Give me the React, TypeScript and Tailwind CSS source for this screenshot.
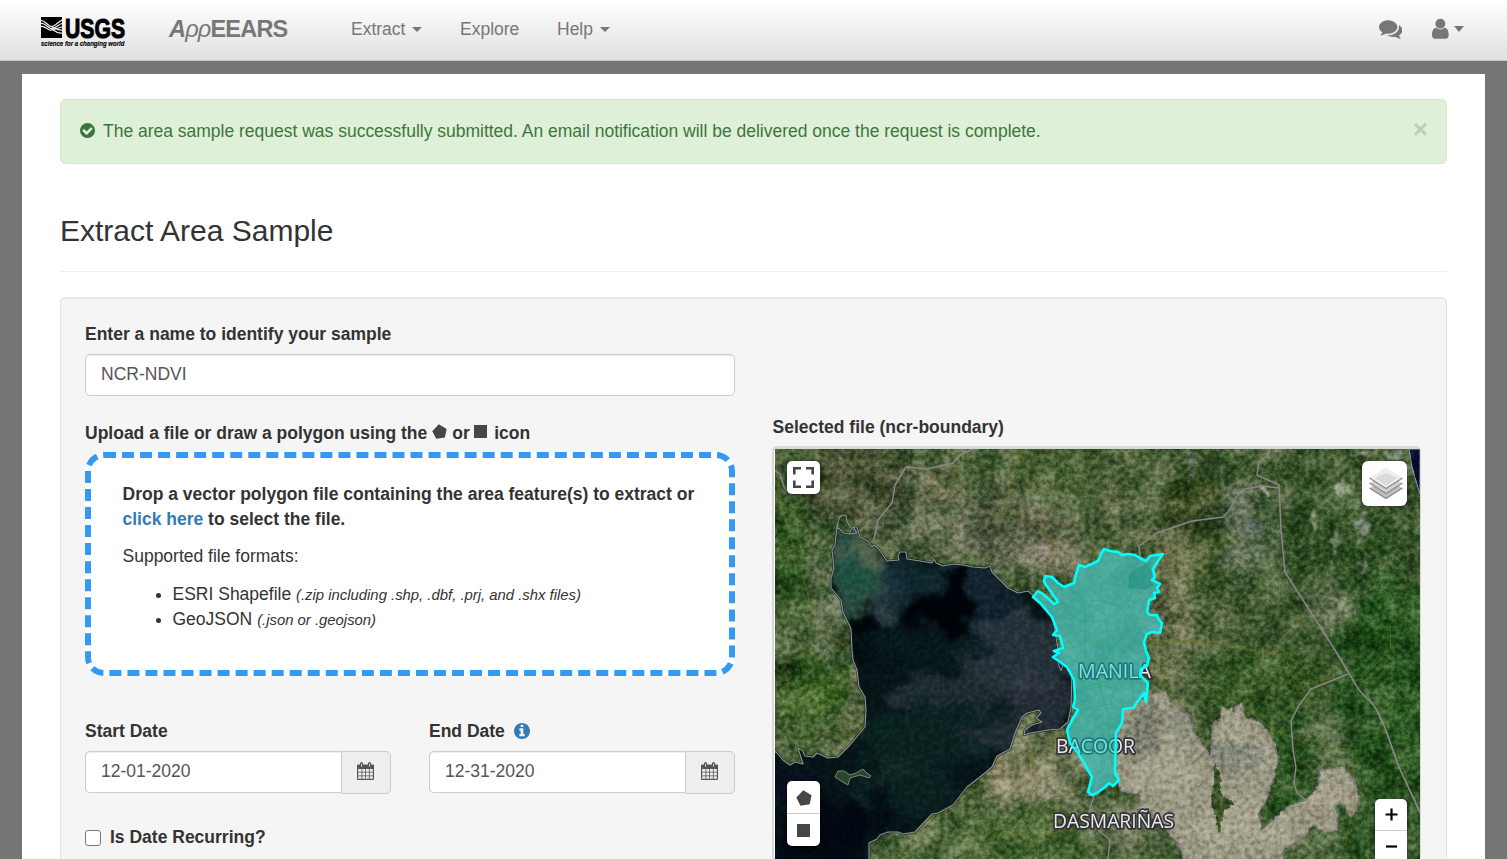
import React from "react";

const BAY =
  "M837 527L835 545L832 550L834 568L831 578L831 588L841 600L843 612L851 629L852 650L853 660L857 670L859 687L865 697L866 710L865 727L850 745L838 757L828 758L817 753L813 757L805 756L802 750L798 748L803 764L795 762L790 765L783 760L777 753L773 750L773 862L869 862L869 843L877 839L880 835L888 832L898 832L903 834L915 832L932 814L938 813L953 805L967 787L980 777L992 767L997 756L1010 749L1015 733L1022 717L1027 713L1039 710L1041 713L1036 718L1042 722L1032 725L1025 730L1024 735L1030 733L1048 730L1060 729L1068 722L1071 707L1072 672L1063 663L1058 650L1055 630L1053 620L1045 605L1035 597L1028 591L1018 593L1008 588L1000 580L992 572L990 566L985 568L973 567L963 565L953 564L943 566L936 563L934 559L932 563L920 561L907 559L906 552L900 552L898 556L899 560L887 561L878 548L874 545L872 547L868 541L860 537L857 527L853 527L849 534L844 533Z";
const LAKE =
  "M1144 697L1153 693L1165 692L1168 696L1170 702L1176 704L1180 710L1188 716L1192 725L1194 732L1200 740L1205 747L1210 757L1212 743L1212 725L1220 718L1222 707L1229 710L1232 706L1233 713L1237 706L1242 703L1245 717L1253 720L1258 722L1267 730L1275 743L1278 760L1273 780L1270 790L1267 800L1258 813L1262 830L1275 818L1290 805L1307 800L1317 787L1320 770L1328 769L1343 767L1348 773L1355 780L1358 797L1355 815L1350 817L1345 805L1335 805L1338 817L1337 832L1325 832L1313 825L1303 837L1283 850L1282 862L1185 862L1177 842L1160 823L1140 810L1139 793L1123 793L1116 780L1116 733L1122 723L1123 709L1133 708Z";
const REGION =
  "M1033 597L1038 591L1043 594L1054 604L1058 602L1044 582L1045 576L1052 577L1058 583L1064 587L1074 583L1076 574L1079 565L1085 567L1098 561L1101 554L1104 549L1110 551L1118 552L1122 555L1128 554L1135 555L1140 558L1146 561L1150 556L1163 554L1158 561L1153 569L1155 577L1152 580L1160 584L1157 588L1159 592L1154 593L1155 598L1149 600L1148 607L1147 612L1150 615L1157 615L1159 620L1162 623L1160 633L1152 632L1147 634L1144 642L1146 651L1149 658L1147 666L1141 669L1140 675L1148 683L1146 702L1144 693L1133 708L1123 709L1122 723L1116 733L1115 773L1119 780L1113 786L1109 783L1105 787L1097 793L1092 795L1088 792L1092 777L1078 753L1070 743L1067 730L1072 720L1078 710L1073 707L1075 700L1074 680L1067 667L1053 657L1059 653L1054 651L1063 648L1060 636L1053 635L1057 630L1052 617L1040 603Z";
const BORDERS = [
  "M973 449L960 455L953 463L927 469L906 467L895 485L892 503L878 520L874 540",
  "M1270 449L1268 455L1259 462L1257 475L1279 485L1281 530L1285 572L1335 650L1359 690L1375 707L1385 728L1398 765L1420 813",
  "M1279 488L1262 486L1245 489L1235 498L1230 510L1223 517L1192 521L1157 533L1139 546L1140 557",
  "M1348 674L1311 689L1298 707L1291 721L1293 750L1296 767L1294 783L1297 793L1307 801",
  "M775 471L780 474L784 487L790 494",
  "M1088 795L1094 796L1089 812M1105 812L1098 830L1110 840L1108 859",
];
const TRAILS = [
  "M775 455L781 505L790 535L801 570L811 605L828 633L849 650",
  "M788 508L820 489L850 471L858 449",
  "M962 455L1000 500L1037 527L1054 540L1064 575L1073 586",
  "M952 470L965 500L985 512L1040 525L1054 543",
  "M1022 449L1010 480L1006 515M1045 454L1023 500L1028 515",
  "M895 859L920 830L960 800L990 780L1025 758L1070 730",
  "M960 815L1000 835L1045 835L1068 830",
  "M812 740L826 731L850 736L865 725",
  "M1145 641L1210 641L1250 650L1285 655L1297 690L1320 680L1360 680L1390 650",
  "M1420 597L1403 610L1390 625L1391 650",
  "M1210 705L1235 697L1270 728L1310 745L1352 750L1355 800L1345 845",
  "M1150 663L1167 665L1163 680L1180 705",
  "M1030 750L1035 780L1028 800M1053 728L1053 780",
  "M1105 750L1120 805L1150 859",
];
const STREETS =
  "M1056 605L1082 600L1105 615L1110 650L1098 680L1108 715L1112 765M1075 690L1098 683L1140 675M1085 600L1085 650L1070 665M1040 600L1085 622L1110 620M1110 620L1130 600L1132 585M1085 640L1115 645L1140 620M1096 600L1118 605L1144 635M1080 710L1110 704L1118 680L1104 660M1075 640L1055 645M1078 680L1120 690";

type Blob = [number, number, number, number, string, number];
const LAND_PATCHES: Blob[] = [
  [860, 480, 55, 40, "#3d4028", 0.7],
  [960, 520, 90, 40, "#646650", 0.5],
  [945, 485, 10, 20, "#8f7c5c", 0.6],
  [1010, 540, 60, 30, "#6c6a56", 0.6],
  [1055, 550, 30, 40, "#79735d", 0.6],
  [1060, 470, 60, 30, "#435a2c", 0.6],
  [785, 560, 22, 60, "#265018", 0.8],
  [808, 690, 40, 35, "#355f1d", 0.9],
  [780, 678, 18, 32, "#1a3010", 0.8],
  [827, 615, 12, 60, "#68755a", 0.65],
  [860, 685, 7, 45, "#978c70", 0.5],
  [835, 738, 28, 14, "#6b7147", 0.5],
  [1190, 500, 30, 35, "#293a13", 0.75],
  [1120, 500, 28, 45, "#5b6642", 0.65],
  [1245, 530, 30, 45, "#4b5c48", 0.65],
  [1190, 560, 40, 25, "#586330", 0.5],
  [1230, 620, 70, 40, "#465a30", 0.6],
  [1165, 590, 20, 65, "#81795c", 0.55],
  [1170, 655, 22, 45, "#6d714d", 0.6],
  [1315, 540, 40, 75, "#2a4a1e", 0.7],
  [1380, 580, 32, 80, "#21471a", 0.75],
  [1335, 600, 28, 24, "#606c50", 0.5],
  [1265, 685, 60, 35, "#2b501a", 0.8],
  [1290, 770, 30, 55, "#234f1b", 0.85],
  [1390, 690, 55, 110, "#21501a", 0.85],
  [1330, 730, 20, 28, "#506342", 0.5],
  [1385, 830, 60, 38, "#2a5520", 0.8],
  [1040, 765, 60, 40, "#878467", 0.7],
  [1012, 780, 28, 25, "#999072", 0.6],
  [950, 835, 60, 30, "#5a7040", 0.7],
  [1045, 840, 70, 28, "#48682e", 0.7],
  [1130, 830, 45, 30, "#72785a", 0.6],
];
const WATER_PATCHES: Blob[] = [
  [855, 565, 32, 45, "#315c49", 0.8],
  [865, 550, 26, 12, "#6e7358", 0.6],
  [885, 590, 14, 35, "#475d65", 0.55],
  [850, 575, 18, 20, "#164f42", 0.5],
  [940, 585, 70, 26, "#132e36", 0.75],
  [990, 600, 32, 38, "#142431", 0.7],
  [955, 600, 16, 32, "#000206", 0.95],
  [928, 618, 24, 24, "#000306", 0.95],
  [865, 635, 18, 28, "#000408", 0.85],
  [1020, 650, 55, 40, "#2f3b46", 0.75],
  [960, 690, 70, 20, "#28343a", 0.7],
  [1040, 705, 38, 32, "#353c4b", 0.6],
  [935, 735, 80, 32, "#0a2422", 0.8],
  [1000, 735, 34, 14, "#272f37", 0.8],
  [905, 790, 58, 26, "#0b2322", 0.75],
  [895, 770, 20, 18, "#163022", 0.5],
  [820, 835, 50, 35, "#020511", 0.9],
  [790, 785, 22, 16, "#0a0e22", 0.8],
  [880, 810, 10, 20, "#00070b", 0.7],
  [925, 645, 70, 16, "#081a1e", 0.8],
];
const LAKE_PATCHES: Blob[] = [
  [1140, 735, 18, 28, "#6d7265", 0.7],
  [1190, 725, 26, 18, "#7f8676", 0.6],
  [1165, 770, 30, 30, "#aaa892", 0.7],
  [1240, 760, 25, 18, "#768073", 0.65],
  [1235, 725, 16, 14, "#aba792", 0.65],
  [1260, 755, 12, 22, "#a6a390", 0.6],
  [1240, 825, 55, 28, "#aeab95", 0.6],
  [1325, 795, 25, 18, "#aca791", 0.6],
];
const CLOUDS: Blob[] = [
  [1313, 522, 3, 9, "#bbb9aa", 0.7],
  [1342, 488, 3, 8, "#c0c0b0", 0.75],
  [1336, 545, 4, 14, "#92988a", 0.7],
  [1362, 526, 5, 18, "#8b9288", 0.65],
  [1340, 600, 8, 8, "#a9aa9a", 0.7],
  [1365, 565, 5, 10, "#949a8d", 0.65],
  [1266, 492, 4, 3, "#cfc8b7", 0.85],
  [1363, 453, 9, 4, "#a8ada0", 0.7],
  [1395, 455, 10, 5, "#8f9994", 0.7],
  [1400, 530, 2, 22, "#69795a", 0.5],
  [1255, 527, 8, 4, "#5f7079", 0.6],
  [1190, 465, 5, 12, "#5d6b67", 0.6],
  [1172, 612, 5, 4, "#aaa087", 0.6],
  [1113, 520, 4, 15, "#99947a", 0.4],
];

function Patches({ items }: { items: Blob[] }) {
  return (
    <>
      {items.map(([cx, cy, rx, ry, fill, opacity], i) => (
        <ellipse key={i} cx={cx} cy={cy} rx={rx} ry={ry} fill={fill} opacity={opacity} />
      ))}
    </>
  );
}

function SatelliteMap() {
  return (
    <svg className="block h-[410px] w-[645px]" viewBox="775 449 645 410">
      <defs>
        <filter id="soft" x="-20%" y="-20%" width="140%" height="140%" colorInterpolationFilters="sRGB">
          <feGaussianBlur stdDeviation="9" result="b" />
          <feTurbulence type="fractalNoise" baseFrequency="0.04" numOctaves="4" seed="5" result="n" />
          <feDisplacementMap in="b" in2="n" scale="50" xChannelSelector="R" yChannelSelector="G" />
        </filter>
        <filter id="wisp" x="-20%" y="-20%" width="140%" height="140%" colorInterpolationFilters="sRGB">
          <feTurbulence type="fractalNoise" baseFrequency="0.09" numOctaves="3" seed="4" />
          <feDisplacementMap in="SourceGraphic" scale="24" xChannelSelector="R" yChannelSelector="G" />
          <feGaussianBlur stdDeviation="0.8" />
        </filter>
        <filter id="deep" x="-20%" y="-20%" width="140%" height="140%" colorInterpolationFilters="sRGB">
          <feGaussianBlur stdDeviation="5" result="b" />
          <feTurbulence type="fractalNoise" baseFrequency="0.035" numOctaves="4" seed="8" result="n" />
          <feDisplacementMap in="b" in2="n" scale="42" xChannelSelector="R" yChannelSelector="G" />
        </filter>
        <filter id="rough" x="-5%" y="-5%" width="110%" height="110%" colorInterpolationFilters="sRGB">
          <feTurbulence type="fractalNoise" baseFrequency="0.18" numOctaves="2" seed="3" />
          <feDisplacementMap in="SourceGraphic" scale="5" xChannelSelector="R" yChannelSelector="G" />
        </filter>
        <filter id="grain" x="0" y="0" width="100%" height="100%" colorInterpolationFilters="sRGB">
          <feTurbulence type="fractalNoise" baseFrequency="0.2" numOctaves="4" seed="11" />
          <feColorMatrix values="1.8 .1 0 0 -.43  1.9 0 0 0 -.43  1.8 0 .1 0 -.43  0 0 0 0 1" />
        </filter>
        <filter id="relief" x="0" y="0" width="100%" height="100%" colorInterpolationFilters="sRGB">
          <feTurbulence type="fractalNoise" baseFrequency="0.035" numOctaves="5" seed="23" />
          <feColorMatrix values="2.4 0 0 0 -.68  1.8 0 0 0 -.36  2 0 0 0 -.47  0 0 0 0 1" />
        </filter>
        <clipPath id="bay"><path d={BAY} /></clipPath>
        <clipPath id="lake"><path d={LAKE} /></clipPath>
      </defs>
      <rect x="775" y="449" width="645" height="410" fill="#455c32" />
      <g filter="url(#soft)"><Patches items={LAND_PATCHES} /></g>
      <rect x="775" y="449" width="645" height="410" filter="url(#relief)" opacity="0.5" className="mix-blend-soft-light" />
      <g filter="url(#wisp)"><Patches items={CLOUDS} /></g>
      <path d="M1409 449L1412 467L1416 481L1420 494V449Z" fill="#070d2e" stroke="#8d98a1" strokeWidth="1" />
      <g filter="url(#rough)">
        <path d={LAKE} fill="#97957f" />
        <g clipPath="url(#lake)"><g filter="url(#deep)"><Patches items={LAKE_PATCHES} /></g></g>
        <path d="M1215 763L1213 785L1211 803L1215 816L1220 833L1223 810L1235 804L1222 795L1220 775Z" fill="#3a5127" />
      </g>
      <rect x="775" y="449" width="645" height="410" filter="url(#grain)" opacity="0.5" className="mix-blend-soft-light" />
      <g filter="url(#rough)"><path d={LAKE} fill="none" stroke="#77737a" strokeWidth="1.2" /></g>
      <g clipPath="url(#bay)">
        <path d={BAY} fill="#061416" />
        <g filter="url(#deep)"><Patches items={WATER_PATCHES} /></g>
        <rect x="775" y="500" width="310" height="359" filter="url(#grain)" opacity="0.2" className="mix-blend-soft-light" />
      </g>
      <g strokeLinejoin="round">
        <path d={BAY} fill="none" stroke="#151d20" strokeWidth="2.6" opacity="0.7" />
        <path d={BAY} fill="none" stroke="#8b9290" strokeWidth="1.1" />
        <path d="M837 527L839 518L842 515L846 516L847 522L851 528M853 527L857 533L849 534" fill="none" stroke="#8b9290" strokeWidth="1.1" />
        <path d="M835 777L838 771L844 771L850 775L856 773L863 769L867 773L871 776L869 778L860 775L850 778L848 785L841 781Z" fill="#27482a" stroke="#778880" strokeWidth="1" />
        <path d="M1058 663L1061 671L1063 665" fill="none" stroke="#858c91" />
      </g>
      <g fill="none" stroke="#76741c" strokeWidth="1" opacity="0.6" strokeLinejoin="round">
        {TRAILS.map((d) => <path key={d} d={d} />)}
      </g>
      <g fill="none" stroke="#8b8489" strokeWidth="1.5" strokeLinejoin="round">
        {BORDERS.map((d) => <path key={d} d={d} />)}
        <path d="M1369 698L1378 711L1388 735L1401 772L1420 810" strokeWidth="1" />
      </g>
      <path d={REGION} fill="#a9a498" opacity="0.6" />
      <g
        className="font-['Open_Sans','Noto_Sans',sans-serif] text-[20px]"
        fill="#e9e9e9"
        stroke="#333238"
        strokeWidth="3.5"
        strokeLinejoin="round"
        paintOrder="stroke"
      >
        <text x="1078" y="678" textLength="73" lengthAdjust="spacingAndGlyphs">MANILA</text>
        <text x="1056" y="753" textLength="79" lengthAdjust="spacingAndGlyphs">BACOOR</text>
        <text x="1053" y="828" textLength="121" lengthAdjust="spacingAndGlyphs">DASMARIÑAS</text>
      </g>
      <path d={REGION} fill="#00d0cc" fillOpacity="0.45" />
      <path d={STREETS} fill="none" stroke="#2da875" strokeWidth="1" opacity="0.65" />
      <path d="M1130 572L1150 562L1154 585L1145 590L1128 588Z" fill="#148574" opacity="0.4" />
      <path d={REGION} fill="none" stroke="#00ffff" strokeWidth="2.6" strokeLinejoin="round" />
    </svg>
  );
}

function UsgsLogo() {
  return (
    <svg className="h-[32px] w-[86px] overflow-visible" viewBox="0 0 86 32">
      <rect x="1" y="1" width="21" height="21" />
      <g fill="none" stroke="#f4f4f4" strokeWidth="1.2">
        <path d="M1 4.500C5 4.500 7 9 11 10.500C14 11.200 18 6 22 4" />
        <path d="M1 7.500C5 7 7 11 11 12.500C15 13.500 18 8.500 22 7.500" />
        <path d="M1 10.500C4 9.500 6 12.500 9.500 14C13 15 18 11.500 22 11" />
        <path d="M11 12.500C14 14 17 18 22 17" />
        <path d="M12 11C15 12 18 14.500 22 14" />
      </g>
      <text x="25" y="21.700" textLength="60" lengthAdjust="spacingAndGlyphs" stroke="#000" strokeWidth="1.1" className="font-['Liberation_Sans',Arial,sans-serif] text-[27.500px] font-bold">USGS</text>
      <text x="1" y="29.500" textLength="83.500" lengthAdjust="spacingAndGlyphs" stroke="#000" strokeWidth="0.15" className="font-['Liberation_Sans',Arial,sans-serif] text-[7.500px] font-bold italic">science for a changing world</text>
    </svg>
  );
}

function Caret() {
  return <span className="inline-block border-x-[5px] border-t-[5px] border-x-transparent border-t-[#777]" />;
}

const DISC = "m252 162q0 209-103 385.500t-279.500 279.500-385.500 103-385.500-103-279.500-279.500-103-385.500 103-385.500 279.500-279.500 385.500-103 385.500 103 279.500 279.500 103 385.500z";

function CheckCircle({ className }: { className: string }) {
  return (
    <svg className={className} viewBox="128 128 1536 1536" fill="currentColor">
      <path d={"M1412 734q0-28-18-46l-91-90q-19-19-45-19t-45 19l-408 407-226-226q-19-19-45-19t-45 19l-91 90q-18 18-18 46 0 27 18 45l362 362q19 19 45 19 27 0 46-19l543-543q18-18 18-45z" + DISC} />
    </svg>
  );
}

function InfoCircle({ className }: { className: string }) {
  return (
    <svg className={className} viewBox="128 128 1536 1536" fill="currentColor">
      <path d="M1152 1376v-160q0-14-9-23t-23-9h-96v-512q0-14-9-23t-23-9h-320q-14 0-23 9t-9 23v160q0 14 9 23t23 9h96v320h-96q-14 0-23 9t-9 23v160q0 14 9 23t23 9h448q14 0 23-9t9-23zm-128-896v-160q0-14-9-23t-23-9h-192q-14 0-23 9t-9 23v160q0 14 9 23t23 9h192q14 0 23-9t9-23zm640 416q0 209-103 385.500t-279.500 279.500-385.500 103-385.500-103-279.500-279.500-103-385.500 103-385.500 279.500-279.500 385.500-103 385.500 103 279.500 279.500 103 385.500z" />
    </svg>
  );
}

function CommentsIcon({ className }: { className: string }) {
  return (
    <svg className={className} viewBox="0 0 1792 1792" fill="currentColor">
      <path d="M1408 768q0 139-94 257t-256.500 186.500-353.500 68.500q-86 0-176-16-124 88-278 128-36 9-86 16h-3q-11 0-20.500-8t-11.500-21q-1-3-1-6.500t.5-6.500 2-6l2.500-5 3.500-5.500 4-5 4.500-5 4-4.500q5-6 23-25t26-29.500 22.500-29 25-38.500 20.500-44q-124-72-195-177t-71-224q0-139 94-257t256.500-186.500 353.500-68.500 353.500 68.500 256.500 186.500 94 257zm384 256q0 120-71 224.500t-195 176.500q10 24 20.500 44t25 38.500 22.500 29 26 29.500 23 25q1 1 4 4.500t4.500 5 4 5 3.500 5.500l2.500 5 2 6 .5 6.500-1 6.500q-3 14-13 22t-22 7q-50-7-86-16-154-40-278-128-90 16-176 16-271 0-472-132 58 4 88 4 161 0 309-45t264-129q125-92 192-212t67-254q0-77-23-152 129 71 204 178t75 230z" />
    </svg>
  );
}

function UserIcon({ className }: { className: string }) {
  return (
    <svg className={className} viewBox="256 0 1280 1792" fill="currentColor">
      <path d="M1536 1399q0 109-62.500 187t-150.500 78h-854q-88 0-150.500-78t-62.500-187q0-85 8.500-160.500t31.500-152 58.500-131 94-89 134.500-34.500q131 128 313 128t313-128q76 0 134.500 34.500t94 89 58.500 131 31.500 152 8.500 160.500zm-256-887q0 159-112.500 271.500t-271.500 112.500-271.500-112.500-112.500-271.500 112.500-271.500 271.500-112.500 271.500 112.500 112.500 271.500z" />
    </svg>
  );
}

function Pentagon({ className }: { className: string }) {
  return (
    <svg className={className} viewBox="0 0 16 16" fill="#464646">
      <path d="M7.300.3L15.600 5.200L13.700 14.300L4.500 15.700L.3 7.600Z" />
    </svg>
  );
}

function CalendarIcon() {
  return (
    <svg className="h-[18px] w-[17px]" viewBox="0 0 17 18">
      <path fill="#555" d="M1.200 2.500H3V1.500A1.500 1.500 0 0 1 6 1.500V2.500H11V1.500A1.500 1.500 0 0 1 14 1.500V2.500H15.800A1.200 1.200 0 0 1 17 3.700V16.800A1.200 1.200 0 0 1 15.800 18H1.200A1.200 1.200 0 0 1 0 16.800V3.700A1.200 1.200 0 0 1 1.200 2.500Z" />
      <path fill="#eee" d="M1.200 7H4.500V9.800H1.200ZM5.300 7H8.200V9.800H5.300ZM9 7H11.900V9.800H9ZM12.700 7H15.800V9.800H12.700ZM1.200 10.600H4.500V13.500H1.200ZM5.300 10.600H8.200V13.500H5.300ZM9 10.600H11.900V13.500H9ZM12.700 10.600H15.800V13.500H12.700ZM1.200 14.300H4.500V16.800H1.200ZM5.300 14.300H8.200V16.800H5.300ZM9 14.300H11.900V16.800H9ZM12.700 14.300H15.800V16.800H12.700Z" />
      <path fill="#eee" d="M4.100 1.500H4.900V4.700H4.100ZM12.100 1.500H12.900V4.700H12.100Z" />
    </svg>
  );
}

function DateField({ label, value, info }: { label: string; value: string; info?: boolean }) {
  return (
    <div className="w-[306px]">
      <div className="flex h-[25px] items-center font-bold">
        {label}
        {info && <InfoCircle className="mb-[2px] ml-[9px] size-[16px] text-[#337ab7]" />}
      </div>
      <div className="mt-[7px] flex h-[43px]">
        <div className="flex h-[42px] w-[256px] items-center rounded-l-[5px] border border-r-0 border-[#ccc] bg-white pl-[15px] pb-[2px] text-[#555] shadow-[inset_0_1px_1px_rgba(0,0,0,0.075)]">
          {value}
        </div>
        <div className="flex w-[50px] items-center justify-center rounded-r-[5px] border border-[#ccc] bg-[#eee] pb-[4px] pr-[1px]">
          <CalendarIcon />
        </div>
      </div>
    </div>
  );
}

export default function App() {
  return (
    <div className="h-[859px] overflow-hidden bg-[#757575] font-['Liberation_Sans',Arial,sans-serif] text-[17.500px] leading-[25px] text-[#333]">
      <header className="flex h-[61px] items-start border-b border-[#c8c8c8] bg-linear-to-b from-white to-[#e1e1e1] text-[#777]">
        <div className="ml-[40px] mt-[16px]"><UsgsLogo /></div>
        <div className="ml-[43px] mt-[17px] flex w-[120px] text-[23.500px] font-bold tracking-[-0.800px]">
          <span className="italic">A</span>
          <span className="font-normal italic">ρρ</span>
          <span>EEARS</span>
        </div>
        <nav className="ml-[62px] mt-[17px] flex">
          <span className="flex w-[109px] items-center gap-[6.500px]">Extract <Caret /></span>
          <span className="w-[97px]">Explore</span>
          <span className="flex items-center gap-[6.500px]">Help <Caret /></span>
        </nav>
        <div className="ml-auto mr-[43px] mt-[17px] flex items-center">
          <CommentsIcon className="mr-[30.500px] size-[23.330px]" />
          <UserIcon className="h-[23.330px] w-[16.660px]" />
          <span className="ml-[5px] mt-[1px] border-x-[5.500px] border-t-[6px] border-x-transparent border-t-[#777]" />
        </div>
      </header>

      <main className="mx-[22px] mt-[13px] h-[785px] bg-white px-[38px] pt-[25px]">
        <div className="flex h-[65px] items-start rounded-[5px] border border-[#d6e9c6] bg-[#dff0d8] pl-[19px] pr-[18px] pt-[19px] text-[#3c763d]">
          <CheckCircle className="mt-[4px] size-[15px]" />
          <p className="ml-[8px] tracking-[-0.008px]">The area sample request was successfully submitted. An email notification will be delivered once the request is complete.</p>
          <span className="ml-auto mt-[-2px] text-[26px] font-bold leading-[25px] text-[#b9d3b3]">×</span>
        </div>

        <h1 className="mt-[50px] border-b border-[#eee] pb-[23px] text-[30px] leading-[34px]">Extract Area Sample</h1>

        <section className="mt-[25px] flex h-[620px] rounded-[5px] border border-[#e3e3e3] bg-[#f5f5f5] pl-[24px] pt-[24px] shadow-[inset_0_1px_1px_rgba(0,0,0,0.05)]">
          <div className="w-[650px]">
            <div className="font-bold">Enter a name to identify your sample</div>
            <div className="mt-[7px] flex h-[42px] items-center rounded-[5px] border border-[#ccc] bg-white pb-[2px] pl-[15px] text-[#555] shadow-[inset_0_1px_1px_rgba(0,0,0,0.075)]">
              NCR-NDVI
            </div>
            <div className="mt-[25px] flex font-bold">
              Upload a file or draw a polygon using the
              <Pentagon className="ml-[5px] mt-[3px] size-[15px]" />
              <span className="ml-[5px]">or</span>
              <span className="ml-[4px] mt-[4px] size-[13px] bg-[#464646]" />
              <span className="ml-[7.500px]">icon</span>
            </div>
            <div className="mt-[6px] h-[224px] rounded-[19px] border-[6px] border-dashed border-[#3399f3] bg-white pl-[31.500px] pt-[24px]">
              <p className="font-bold">
                Drop a vector polygon file containing the area feature(s) to extract or<br />
                <span className="text-[#337ab7]">click here</span> to select the file.
              </p>
              <p className="mt-[12px]">Supported file formats:</p>
              <ul className="mt-[13px] list-disc pl-[50px]">
                <li className="h-[25px]">ESRI Shapefile <em className="text-[14.875px] leading-none">(.zip including .shp, .dbf, .prj, and .shx files)</em></li>
                <li className="h-[25px]">GeoJSON <em className="text-[14.875px] leading-none">(.json or .geojson)</em></li>
              </ul>
            </div>
            <div className="mt-[43px] flex gap-[38px]">
              <DateField label="Start Date" value="12-01-2020" />
              <DateField label="End Date" value="12-31-2020" info />
            </div>
            <div className="mt-[31px] flex items-center font-bold">
              <span className="mr-[9px] size-[16px] rounded-[3px] border border-[#767676] bg-white" />
              Is Date Recurring?
            </div>
          </div>

          <div className="ml-[37.500px] w-[652px] pt-[93px]">
            <div className="font-bold">Selected file (ncr-boundary)</div>
            <div className="relative -ml-[0.500px] mt-[6px] w-[649px] rounded-[5px] border-[2px] border-t-[3px] border-[#d9d9d9] bg-white">
              <div className="-mr-[1px] ml-[1px]"><SatelliteMap /></div>
              <div className="absolute left-[13px] top-[12px] flex size-[33px] items-center justify-center rounded-[5px] bg-white shadow-[0_1px_5px_rgba(0,0,0,0.65)]">
                <svg className="size-[21px]" viewBox="0 0 21 21" fill="none" stroke="#464646" strokeWidth="2.600">
                  <path d="M1.300 7.500V1.300H8M13 1.300H19.700V7.500M19.700 13.500V19.700H13M8 19.700H1.300V13.500" />
                </svg>
              </div>
              <div className="absolute right-[12px] top-[12px] flex size-[45px] items-center justify-center rounded-[6px] bg-white pl-[2px] shadow-[0_1px_5px_rgba(0,0,0,0.4)]">
                <svg className="h-[33px] w-[34px]" viewBox="0 0 34 33">
                  <path d="M.5 21.500L17 11L33.500 21.500L17 32Z" fill="#bdbdbd" />
                  <path d="M.5 21L17 31.500L33.500 21" fill="none" stroke="#8b8b8b" strokeWidth="1.100" />
                  <path d="M.5 16.500L17 6L33.500 16.500L17 27Z" fill="#d0d0d0" />
                  <path d="M.5 16L17 26.500L33.500 16" fill="none" stroke="#8b8b8b" strokeWidth="1.100" />
                  <path d="M.5 11L17 .5L33.500 11L17 21.500Z" fill="#ededed" />
                  <path d="M6 11L17 6L28 11L17 19Z" fill="#dadada" />
                  <path d="M.5 11L17 21.500L33.500 11" fill="none" stroke="#8b8b8b" strokeWidth="1.200" />
                </svg>
              </div>
              <div className="absolute left-[13px] top-[332px] h-[65px] w-[33px] rounded-[5px] bg-white shadow-[0_1px_5px_rgba(0,0,0,0.65)]">
                <div className="flex h-[33px] items-center justify-center border-b border-[#ccc] pl-[1px] pt-[1px]"><Pentagon className="size-[16px]" /></div>
                <div className="flex h-[32px] items-center justify-center"><span className="size-[13px] bg-[#464646]" /></div>
              </div>
              <div className="absolute right-[12px] top-[350px] h-[65px] w-[32px] rounded-[5px] bg-white shadow-[0_1px_5px_rgba(0,0,0,0.65)]">
                <div className="flex h-[32px] items-center justify-center border-b border-[#ccc] pl-[1px]">
                  <svg className="size-[13px]" viewBox="0 0 13 13" stroke="#000" strokeWidth="2.200"><path d="M.5 6.500H12.500M6.500.5V12.500" /></svg>
                </div>
                <div className="flex h-[30px] items-center justify-center pl-[1px]">
                  <svg className="size-[13px]" viewBox="0 0 13 13" stroke="#000" strokeWidth="2.200"><path d="M1 6.500H12" /></svg>
                </div>
              </div>
            </div>
          </div>
        </section>
      </main>
    </div>
  );
}
